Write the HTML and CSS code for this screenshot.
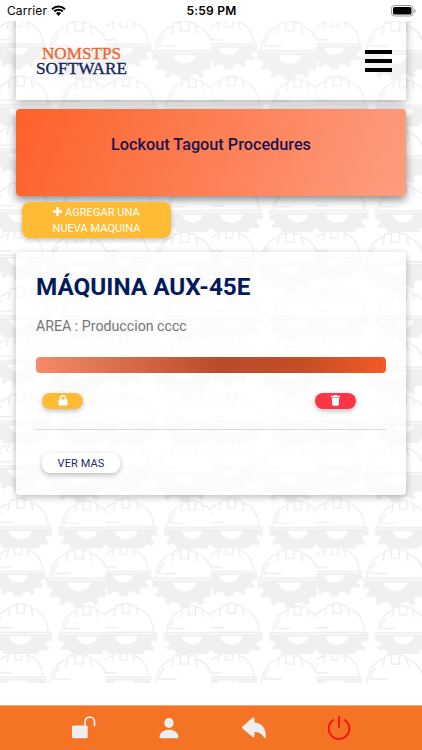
FILE: index.html
```html
<!DOCTYPE html>
<html lang="es">
<head>
    <meta charset="utf-8">
    <title>NOMSTPS Software</title>
    <meta name="viewport" content="width=device-width, initial-scale=1">
    <link rel="stylesheet" href="styles.css">
</head>
<body>
    <div class="status">
        <span class="carrier">Carrier
            <svg width="15" height="11" viewBox="0 0 15 11"><path d="M1 4.2a9.3 9.3 0 0 1 13 0M3.2 6.5a6.1 6.1 0 0 1 8.6 0" fill="none" stroke="#000" stroke-width="2.1"/><path d="M5 8.3a3.6 3.6 0 0 1 5 0L7.5 11z"/></svg>
        </span>
        <span class="time">5:59 PM</span>
        <svg class="battery" width="25" height="12" viewBox="0 0 25 12"><rect x=".5" y=".5" width="21.500" height="10.500" rx="3" fill="#fff" stroke="#999"/><rect x="2" y="2" width="18.500" height="7.500" rx="1.500"/><path d="M23.300 4v4q1.200-.7 1.200-2t-1.200-2z" fill="#888"/></svg>
    </div>

    <div class="page">
        <svg class="pattern" width="422" height="662">
            <defs>
                <g id="helmet">
                    <path fill="#f0f0f0" d="M-30 2H30L33 5L32 8L27 8L26 12L30 15L28 18L22 17L18 20L20 24L16 26L12 22L5 24V28H-5V24L-12 22L-16 26L-20 24L-18 20L-22 17L-28 18L-30 15L-26 12L-27 8L-32 8L-33 5Z"/>
                    <path fill="#fff" d="M-12 3H12C9 14.500-9 14.500-12 3Z"/>
                    <path class="line" fill="#fff" d="M-29-1C-28-14-22-23-12-26L-10-29Q-7-30-4-29V-31H4V-29Q7-30 10-29L12-26C22-23 28-14 29-1Z"/>
                    <rect class="line" x="-32" y="-1" width="64" height="2.500" fill="#fff"/>
                    <path class="line" fill="none" d="M-4-29V-21H4V-29M-11-27L-13-18M11-27L13-18M-26-6H-8M-26-6Q-24-13-20-17"/>
                </g>
                <pattern id="tile" width="105.500" height="105.500" patternUnits="userSpaceOnUse">
                    <use href="#helmet" transform="translate(86.700 85.500) scale(.87 .9)"/>
                    <use href="#helmet" transform="translate(20.500 85) scale(.96)"/>
                    <use href="#helmet" transform="translate(18 24) scale(.86)"/>
                    <use href="#helmet" transform="translate(79 31)"/>
                </pattern>
            </defs>
            <rect width="422" height="662" fill="url(#tile)"/>
        </svg>

        <div class="header">
            <svg class="logo" width="96" height="40" viewBox="-2 -3 96 40">
                <text x="6" y="15" textLength="79" lengthAdjust="spacingAndGlyphs" fill="#f0652c" stroke="#f0652c">NOMSTPS</text>
                <text x="0" y="30" textLength="91" lengthAdjust="spacingAndGlyphs" fill="#14245f" stroke="#14245f">SOFTWARE</text>
            </svg>
            <div class="menu"><i></i><i></i><i></i></div>
        </div>

        <div class="banner">Lockout Tagout Procedures</div>

        <button class="btn add">
            <svg width="9" height="9" viewBox="0 0 9 9"><path d="M3.200 0h2.600v3.200H9v2.600H5.800V9H3.200V5.800H0V3.200h3.200z" fill="#fff"/></svg>
            AGREGAR UNA<br>NUEVA MAQUINA
        </button>

        <div class="card">
            <h2>MÁQUINA AUX-45E</h2>
            <p>AREA : Produccion cccc</p>
            <div class="bar"></div>
            <div class="actions">
                <button class="btn pill lock"><svg width="10" height="11" viewBox="0 0 10 11"><rect x=".5" y="4.500" width="9" height="6" rx="1" fill="#fff"/><path d="M2.500 5V3.200a2.500 2.500 0 0 1 5 0V5" fill="none" stroke="#fff" stroke-width="1.500"/></svg></button>
                <button class="btn pill trash"><svg width="9" height="11" viewBox="0 0 9 11"><path d="M0 .8h2.700L3.300 0h2.400l.6.800H9v1.100H0zM.8 2.400h7.400l-.5 7.300q-.1 1-1 1H2.300q-.9 0-1-1z" fill="#fff"/></svg></button>
            </div>
            <hr>
            <button class="btn more">VER MAS</button>
        </div>
    </div>

    <div class="footer">
        <svg width="24" height="24" viewBox="0 0 24 24"><rect x="0" y="9.500" width="15.700" height="12.800" rx="1.500" fill="#eee"/><path d="M13 10V5.800a4.700 4.700 0 0 1 9.500 0v3.700" fill="none" stroke="#eee" stroke-width="1.700" stroke-linecap="round"/></svg>
        <svg width="24" height="24" viewBox="0 0 24 24"><ellipse cx="12" cy="7" rx="4.700" ry="5" fill="#eee"/><path d="M2.500 20.500C3.200 16 7 13.700 12 13.700s8.800 2.300 9.500 6.800q.2 1.800-1.400 1.800H3.900q-1.600 0-1.400-1.800z" fill="#eee"/></svg>
        <svg width="24" height="24" viewBox="0 0 24 24"><path d="M.3 10.700L10.600 1.500Q12.500.6 12.500 2.800V6.500C19.500 6.800 24 12 24 21Q23.500 22.500 22 21.500C19.500 17.500 17 16 12.500 16V20Q12.300 22 10.500 20.900L.3 12.300Q-.4 11.500.3 10.700z" fill="#eee"/></svg>
        <svg width="24" height="24" viewBox="0 0 24 24"><path d="M6.400 4A10.300 10.300 0 1 0 17.600 4M12 1v10" fill="none" stroke="#f01414" stroke-width="1.900" stroke-linecap="round"/></svg>
    </div>
</body>
</html>
```
FILE: styles.css
```css
* {
    box-sizing: border-box;
}
body {
    margin: 0;
    height: 750px;
    display: flex;
    flex-direction: column;
    background-color: #fff;
    font-family: Roboto, sans-serif;
    overflow: hidden;
}
svg {
    display: block;
}
.status {
    height: 21px;
    padding: 0 6px 0 7px;
    display: grid;
    grid-template-columns: 1fr auto 1fr;
    align-items: center;
    font-family: Inter, sans-serif;
    font-size: 12px;
    line-height: 21px;
}
.carrier {
    display: flex;
    gap: 4px;
    align-items: center;
    letter-spacing: 0.1px;
}
.time {
    font-weight: 600;
    letter-spacing: 0.2px;
}
.battery {
    justify-self: end;
}
.page {
    position: relative;
    height: 684px;
    padding: 0 16px;
    overflow: hidden;
    isolation: isolate;
}
.pattern {
    position: absolute;
    left: 0;
    top: 0;
    z-index: -1;
}
.line {
    stroke: #ececec;
    stroke-width: 1.3;
}
.header {
    height: 79px;
    padding: 0 14px 0 18px;
    display: flex;
    justify-content: space-between;
    align-items: center;
    position: relative;
}
/* shadow starts above the page so it has no top edge */
.header::before {
    content: "";
    position: absolute;
    inset: -20px 0 0;
    background-color: rgba(255, 255, 255, 0.15);
    box-shadow: 0 3px 9px rgba(0, 0, 0, 0.3);
    z-index: -1;
}
.logo text {
    font-family: "Liberation Serif", serif;
    font-size: 17.5px;
    stroke-width: 0.35px;
}
.menu {
    width: 27px;
    display: flex;
    flex-direction: column;
    gap: 5px;
}
.menu i {
    height: 4px;
    background-color: #000;
}
.banner {
    height: 87.5px;
    margin-top: 8.5px;
    padding-top: 25.5px;
    border-radius: 4px;
    background: linear-gradient(110deg, #fc6129, #fe9d80);
    box-shadow: 0 4px 9px rgba(0, 0, 0, 0.45);
    color: #1c1450;
    font-size: 16.25px;
    font-weight: 500;
    line-height: 22px;
    text-align: center;
}
.btn {
    display: block;
    border: none;
    padding: 0;
    font-family: Roboto, sans-serif;
    font-size: 11px;
    box-shadow: 0 2px 5px rgba(0, 0, 0, 0.25);
}
.add {
    width: 149px;
    height: 36px;
    margin: 6px 0 0 6px;
    padding-top: 1px;
    border-radius: 8px;
    background-color: #ffbb33;
    color: #fff;
    line-height: 16px;
    letter-spacing: 0.05px;
}
.add svg {
    display: inline-block;
}
.card {
    height: 243px;
    margin-top: 14px;
    padding: 20px;
    border-radius: 4px;
    background-color: rgba(255, 255, 255, 0.7);
    box-shadow: 0 2px 7px rgba(0, 0, 0, 0.28);
}
.card h2 {
    margin: 0;
    color: #031a5b;
    font-size: 24.3px;
    font-weight: 700;
    line-height: 30px;
}
.card p {
    margin: 15px 0 0;
    color: #757575;
    font-size: 14.2px;
    line-height: 19px;
}
.bar {
    height: 16px;
    margin-top: 21px;
    border-radius: 4px;
    background: linear-gradient(90deg, #f58b68, #b94c2b 52%, #c34d27 75%, #f35a26);
}
.actions {
    display: flex;
    justify-content: space-between;
    margin: 20px 30px 0 6px;
}
.pill {
    width: 41px;
    height: 16px;
    border-radius: 8px;
    display: flex;
    justify-content: center;
    align-items: flex-start;
    padding-top: 2px;
}
.lock {
    background-color: #ffbb33;
}
.trash {
    background-color: #ff3547;
}
.card hr {
    margin: 20px 0 0;
    border: none;
    border-top: 1px solid #dcdcdc;
}
.more {
    width: 78px;
    height: 20px;
    margin: 23px 0 0 6px;
    border-radius: 8px;
    background-color: #fff;
    color: #1d2a66;
    letter-spacing: 0.1px;
}
.footer {
    height: 45px;
    padding: 0 41px;
    display: grid;
    grid-template-columns: repeat(4, 1fr);
    justify-items: center;
    align-items: center;
    background-color: #f57324;
    border-top: 1px solid #f6a878;
}
```
